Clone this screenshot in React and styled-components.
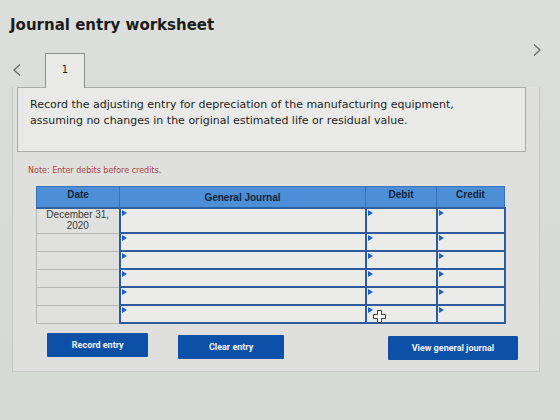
import React from 'react';
import styled, { createGlobalStyle } from 'styled-components';

const GlobalStyle = createGlobalStyle`
  body {
    margin: 0;
    background: #d8dad6;
    font-family: 'DejaVu Sans', Verdana, sans-serif;
  }
`;

const Page = styled.div`
  width: 560px;
  height: 420px;
  overflow: hidden;
  background: linear-gradient(180deg, #dcdedb 0%, #d9dbd7 60%, #d6d8d4 100%);
`;

const Title = styled.h1`
  margin: 0;
  padding: 15px 0 0 10px;
  font-size: 15px;
  line-height: 20px;
  font-weight: bold;
  color: #1c1c1c;
`;

const TabRow = styled.div`
  display: flex;
  align-items: flex-end;
  height: 35px;
  margin-top: 17px;
  padding: 0 20px 0 12px;
`;

const Chevron = styled.button`
  border: 0;
  background: none;
  padding: 0;
  display: flex;
  color: #6a6c6a;
  align-self: ${p => (p.$right ? 'flex-start' : 'center')};
  margin-left: ${p => (p.$right ? 'auto' : '0')};
  margin-top: ${p => (p.$right ? '-9px' : '0')};
  margin-right: ${p => (p.$right ? '-2px' : '0')};
`;

const Tab = styled.div`
  width: 40px;
  height: 35px;
  margin-left: 23px;
  margin-bottom: -1px;
  position: relative;
  z-index: 1;
  box-sizing: border-box;
  border: 1px solid #8d8f8c;
  border-bottom: 0;
  background: #e9eae7;
  display: flex;
  justify-content: center;
  padding-top: 10px;
  font-size: 10px;
  color: #222;
`;

const Worksheet = styled.div`
  margin: 0 20px 0 12px;
  padding-bottom: 11px;
  border: 1px solid #c6c8c4;
  border-top: 0;
  background: #dfe0dd;
`;

const Instructions = styled.div`
  margin: 0 13px 0 4px;
  height: 65px;
  box-sizing: border-box;
  padding: 9px 12px 8px;
  border: 1px solid #a9aba8;
  background: #e9eae7;
  font-size: 11px;
  line-height: 16px;
  color: #1e1e1e;
`;

const Note = styled.p`
  margin: 14px 0 0 15px;
  font-size: 8px;
  line-height: 10px;
  color: #a8443c;
`;

const Journal = styled.table`
  margin: 10px 0 0 23px;
  border-collapse: collapse;
  table-layout: fixed;
  font-family: 'Liberation Sans', Arial, sans-serif;
`;

const HeadCell = styled.th`
  width: ${p => p.$w}px;
  height: 18px;
  padding: 0;
  background: #4c8fd6;
  border: 1px solid #3a74b8;
  border-bottom: 2px solid #2e5f9e;
  font-size: 10px;
  font-weight: bold;
  color: #16243a;
  text-align: center;
  vertical-align: ${p => (p.$top ? 'top' : 'middle')};
  padding-top: ${p => (p.$top ? '2px' : '0')};
`;

const DateCell = styled.td`
  height: ${p => p.$h}px;
  padding: 0;
  background: #e0e1de;
  border: 1px solid #b5b7b4;
  border-right: 2px solid #2d5b9c;
  font-size: 10px;
  line-height: 11px;
  color: #3a3a3a;
  text-align: center;
  vertical-align: top;
`;

const EntryCell = styled.td`
  position: relative;
  height: ${p => p.$h}px;
  padding: 0;
  background: #ebecea;
  border: 2px solid #2d5b9c;

  &::before {
    content: '';
    position: absolute;
    top: 1px;
    left: 1px;
    border-style: solid;
    border-width: 3px 0 3px 5px;
    border-color: transparent transparent transparent #1d5fc4;
  }
`;

const Pointer = styled.svg`
  position: absolute;
  left: 6px;
  top: 4px;
`;

const Actions = styled.div`
  display: flex;
  align-items: flex-start;
  margin: 9px 0 0 34px;
  padding-right: 21px;
`;

const ActionButton = styled.button`
  width: ${p => p.$w}px;
  height: 24px;
  margin-left: ${p => p.$gap || 0}px;
  margin-top: ${p => p.$drop || 0}px;
  border: 0;
  border-radius: 1px;
  background: #0c50a8;
  color: #eef3fa;
  font-family: Roboto, 'Liberation Sans', sans-serif;
  font-size: 9px;
  font-weight: bold;
`;

const columns = [
  { label: 'Date', width: 82, top: true },
  { label: 'General Journal', width: 245 },
  { label: 'Debit', width: 70, top: true },
  { label: 'Credit', width: 67, top: true }
];

const rows = [
  { date: ['December 31,', '2020'], height: 23 },
  { height: 16 },
  { height: 16 },
  { height: 16 },
  { height: 16 },
  { height: 16, cursor: true }
];

function ArrowIcon({ flip }) {
  return (
    <svg width="10" height="14" viewBox="0 0 10 14">
      <path
        d={flip ? 'M2 1.5 L8 7 L2 12.5' : 'M8 1.5 L2 7 L8 12.5'}
        fill="none"
        stroke="currentColor"
        strokeWidth="1.3"
      />
    </svg>
  );
}

export default function App() {
  return (
    <Page>
      <GlobalStyle />
      <Title>Journal entry worksheet</Title>

      <TabRow>
        <Chevron>
          <ArrowIcon />
        </Chevron>
        <Tab>1</Tab>
        <Chevron $right>
          <ArrowIcon flip />
        </Chevron>
      </TabRow>

      <Worksheet>
        <Instructions>
          Record the adjusting entry for depreciation of the manufacturing equipment,
          <br />
          assuming no changes in the original estimated life or residual value.
        </Instructions>

        <Note>Note: Enter debits before credits.</Note>

        <Journal>
          <thead>
            <tr>
              {columns.map(col => (
                <HeadCell key={col.label} $w={col.width} $top={col.top}>
                  {col.label}
                </HeadCell>
              ))}
            </tr>
          </thead>
          <tbody>
            {rows.map((row, i) => (
              <tr key={i}>
                <DateCell $h={row.height}>
                  {row.date &&
                    row.date.map(line => (
                      <div key={line}>{line}</div>
                    ))}
                </DateCell>
                <EntryCell $h={row.height} />
                <EntryCell $h={row.height}>
                  {row.cursor && (
                    <Pointer width="13" height="13" viewBox="0 0 13 13">
                      <path
                        d="M4.5 0.5 H8.5 V4.5 H12.5 V8.5 H8.5 V12.5 H4.5 V8.5 H0.5 V4.5 H4.5 Z"
                        fill="#f4f4f2"
                        stroke="#3a3a3a"
                        strokeWidth="1"
                      />
                    </Pointer>
                  )}
                </EntryCell>
                <EntryCell $h={row.height} />
              </tr>
            ))}
          </tbody>
        </Journal>

        <Actions>
          <ActionButton $w={102}>Record entry</ActionButton>
          <ActionButton $w={106} $gap={30} $drop={2}>Clear entry</ActionButton>
          <ActionButton $w={131} $gap={104} $drop={3}>View general journal</ActionButton>
        </Actions>
      </Worksheet>
    </Page>
  );
}
